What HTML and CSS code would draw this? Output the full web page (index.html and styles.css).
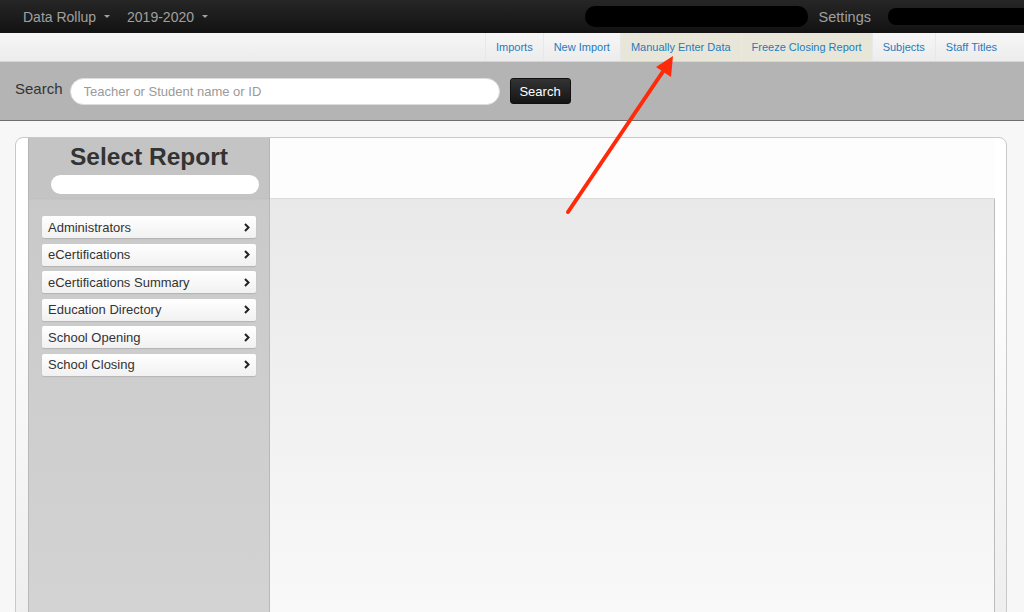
FILE: index.html
```html
<!DOCTYPE html>
<html lang="en">
<head>
    <meta charset="UTF-8">
    <title>Data Rollup - Select Report</title>
    <link rel="stylesheet" href="styles.css">
</head>
<body>

    <div class="topbar">
        <div class="topbar-left">
            <span class="dropdown">Data Rollup <span class="caret"></span></span>
            <span class="dropdown">2019-2020 <span class="caret"></span></span>
        </div>
        <div class="topbar-right">
            <span class="redact redact-wide"></span>
            <span class="settings">Settings</span>
            <span class="redact redact-user"></span>
        </div>
    </div>

    <div class="subnav">
        <a href="#">Imports</a>
        <a href="#">New Import</a>
        <a href="#" class="active">Manually Enter Data</a>
        <a href="#" class="active">Freeze Closing Report</a>
        <a href="#">Subjects</a>
        <a href="#">Staff Titles</a>
    </div>

    <div class="searchbar">
        <label for="searchInput">Search</label>
        <input type="text" id="searchInput" placeholder="Teacher or Student name or ID">
        <button>Search</button>
    </div>

    <div class="page">
        <div class="panel">
            <div class="sidebar">
                <div class="sidebar-head">
                    <h2>Select Report</h2>
                    <div class="filter"></div>
                </div>
                <ul class="report-list">
                    <li>Administrators <svg class="chev" viewBox="0 0 6 9"><path d="M1 1l3.5 3.5L1 8"/></svg></li>
                    <li>eCertifications <svg class="chev" viewBox="0 0 6 9"><path d="M1 1l3.5 3.5L1 8"/></svg></li>
                    <li>eCertifications Summary <svg class="chev" viewBox="0 0 6 9"><path d="M1 1l3.5 3.5L1 8"/></svg></li>
                    <li>Education Directory <svg class="chev" viewBox="0 0 6 9"><path d="M1 1l3.5 3.5L1 8"/></svg></li>
                    <li>School Opening <svg class="chev" viewBox="0 0 6 9"><path d="M1 1l3.5 3.5L1 8"/></svg></li>
                    <li>School Closing <svg class="chev" viewBox="0 0 6 9"><path d="M1 1l3.5 3.5L1 8"/></svg></li>
                </ul>
            </div>
            <div class="report">
                <div class="report-head"></div>
                <div class="report-body"></div>
            </div>
        </div>
    </div>

    <!-- annotation arrow drawn over the screenshot -->
    <svg class="annotation" width="1024" height="612" viewBox="0 0 1024 612">
        <line x1="568" y1="212" x2="664" y2="70" stroke="#ff2a0a" stroke-width="4" stroke-linecap="round"/>
        <polygon points="673,56 656,67 671,77" fill="#ff2a0a"/>
    </svg>

</body>
</html>
```

FILE: styles.css
```css
body {
    margin: 0;
    font-family: "Liberation Sans", Arial, sans-serif;
    background-color: #f7f7f7;
    height: 612px;
    overflow: hidden;
    position: relative;
}
.topbar {
    height: 33px;
    background: linear-gradient(#262626, #121212);
    display: flex;
    justify-content: space-between;
    align-items: center;
}
.topbar-left {
    display: flex;
    gap: 17px;
    padding-left: 23px;
}
.dropdown {
    color: #a0a0a0;
    font-size: 14px;
}
.caret {
    display: inline-block;
    width: 0;
    height: 0;
    border-left: 3px solid transparent;
    border-right: 3px solid transparent;
    border-top: 3px solid #a0a0a0;
    vertical-align: middle;
    margin-left: 4px;
    margin-bottom: 2px;
}
.topbar-right {
    display: flex;
    align-items: center;
}
.redact {
    display: block;
    background-color: #000;
}
.redact-wide {
    width: 223px;
    height: 21px;
    border-radius: 10px;
}
.settings {
    color: #a0a0a0;
    font-size: 14.5px;
    margin: 0 17px 0 11px;
}
.redact-user {
    width: 136px;
    height: 17px;
    border-radius: 8px 0 0 8px;
}
.subnav {
    height: 29px;
    background: linear-gradient(#f6f6f6, #ececec);
    display: flex;
    justify-content: flex-end;
    padding-right: 17px;
    border-bottom: 1px solid #d6d6d6;
    box-sizing: border-box;
}
.subnav a {
    font-size: 11px;
    color: #1f7bc0;
    text-decoration: none;
    padding: 0 10px;
    line-height: 28px;
    border-left: 1px solid #e8e8e8;
}
.subnav a.active {
    background-color: #e7e6d8;
}
.searchbar {
    height: 58px;
    background-color: #b4b4b4;
    border-bottom: 1px solid #6e6e6e;
    display: flex;
    align-items: center;
    padding-left: 15px;
}
.searchbar label {
    font-size: 15px;
    color: #333;
    margin-right: 7px;
    margin-top: -5px;
}
.searchbar input {
    width: 430px;
    height: 27px;
    box-sizing: border-box;
    border: 1px solid #ddd;
    border-radius: 14px;
    padding: 0 13px;
    font-family: "Liberation Sans", Arial, sans-serif;
    font-size: 13px;
    outline: none;
}
.searchbar input::placeholder {
    color: #9a9a9a;
}
.searchbar button {
    margin-left: 10px;
    width: 61px;
    height: 26px;
    background: linear-gradient(#333, #151515);
    color: #fff;
    border: 1px solid #111;
    border-radius: 3px;
    font-family: "Liberation Sans", Arial, sans-serif;
    font-size: 13px;
}
.page {
    padding: 16px 17px 0 15px;
}
.panel {
    height: 480px;
    background: linear-gradient(#fff 20%, #eee);
    border: 1px solid #c9c9c9;
    border-radius: 8px;
    display: flex;
    padding: 0 11px 0 12px;
}
.sidebar {
    width: 240px;
    border-left: 1px solid #b9b9b9;
    border-right: 1px solid #b9b9b9;
    background: linear-gradient(#c8c8c8, #d3d3d3);
}
.sidebar-head {
    height: 60px;
    background-color: #c4c4c4;
    box-shadow: 0 1px 2px rgba(0,0,0,0.06);
    box-sizing: border-box;
    padding-top: 6px;
}
.sidebar h2 {
    margin: 0;
    font-size: 24.5px;
    color: #333;
    text-align: center;
    line-height: 26px;
}
.filter {
    margin: 5px 10px 0 22px;
    height: 19px;
    background-color: #fff;
    border-radius: 10px;
}
.report-list {
    list-style-type: none;
    margin: 0;
    padding: 18px 13px 0 13px;
}
.report-list li {
    height: 22px;
    margin-bottom: 5.5px;
    background: linear-gradient(#fff, #f1f1f1);
    border-radius: 2px;
    box-shadow: 0 1px 1px rgba(0,0,0,0.12);
    display: flex;
    justify-content: space-between;
    align-items: center;
    padding: 0 6px;
    font-size: 13px;
    color: #333;
}
.chev {
    width: 6px;
    height: 9px;
    fill: none;
    stroke: #222;
    stroke-width: 2;
}
.report {
    flex: 1;
    display: flex;
    flex-direction: column;
}
.report-head {
    height: 60px;
    background-color: #fdfdfd;
    border-bottom: 1px solid #dcdcdc;
}
.report-body {
    flex: 1;
    background: linear-gradient(#e9e9e9, #f9f9f9);
    border-right: 1px solid #bcbcbc;
}
.annotation {
    position: absolute;
    top: 0;
    left: 0;
    pointer-events: none;
}
```
